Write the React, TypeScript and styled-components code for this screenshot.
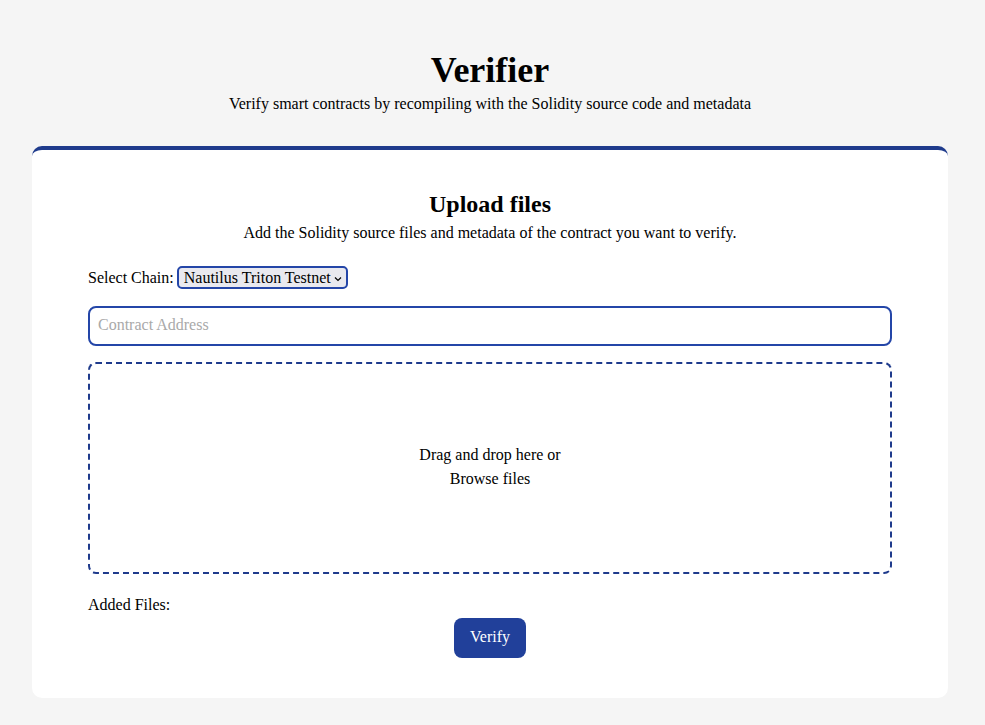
import React from "react";
import styled, { createGlobalStyle } from "styled-components";

const Global = createGlobalStyle`
  html, body { margin: 0; padding: 0; background: #f5f5f5; }
  body { font-family: "Liberation Serif", "Times New Roman", serif; color: #000; }
`;

const Page = styled.div`
  padding: 50px 37px 27px 32px;
`;

const Header = styled.header`
  display: flex;
  flex-direction: column;
  align-items: center;
`;

const Title = styled.h1`
  margin: 0;
  font-size: 36px;
  line-height: 41px;
  font-weight: 700;
`;

const Subtitle = styled.p`
  margin: 4px 0 0;
  font-size: 16px;
  line-height: 18px;
`;

const Card = styled.section`
  margin-top: 33px;
  background: #fff;
  border-top: 4px solid #1f3b8c;
  border-radius: 10px;
  padding: 40px 56px 40px;
  display: flex;
  flex-direction: column;
`;

const CardTitle = styled.h2`
  margin: 0;
  text-align: center;
  font-size: 24px;
  line-height: 28px;
  font-weight: 700;
`;

const CardSub = styled.p`
  margin: 6px 0 0;
  text-align: center;
  font-size: 16px;
  line-height: 18px;
`;

const ChainRow = styled.label`
  margin-top: 24px;
  display: flex;
  align-items: center;
  gap: 3px;
  font-size: 16px;
  height: 23px;
`;

const SelectBox = styled.div`
  display: inline-flex;
  align-items: center;
  gap: 3px;
  height: 23px;
  box-sizing: border-box;
  padding: 0 4px 0 5px;
  border: 2px solid #2446a8;
  border-radius: 5px;
  background: #e9e9ef;
  font-size: 16px;
`;

const Chevron = styled.svg`
  width: 8px;
  height: 8px;
  margin-top: 3px;
`;

const AddressInput = styled.input`
  margin-top: 17px;
  height: 40px;
  box-sizing: border-box;
  width: 100%;
  border: 2px solid #2446a8;
  border-radius: 8px;
  padding: 0 8px 2px;
  font-family: "Liberation Serif", "Times New Roman", serif;
  font-size: 16px;
  outline: none;
  &::placeholder { color: #a9a9a9; }
`;

const DropZone = styled.div`
  margin-top: 16px;
  height: 212px;
  box-sizing: border-box;
  border: 2px dashed #1f3b8c;
  border-radius: 8px;
  padding-bottom: 2px;
  display: flex;
  flex-direction: column;
  align-items: center;
  justify-content: center;
  font-size: 16px;
  line-height: 24px;
  text-align: center;
`;

const AddedLabel = styled.div`
  margin-top: 22px;
  font-size: 16px;
  line-height: 18px;
`;

const VerifyButton = styled.button`
  margin: 4px auto 0;
  height: 40px;
  padding: 0 16px 2px;
  border: none;
  border-radius: 8px;
  background: #21409a;
  color: #fff;
  font-family: "Liberation Serif", "Times New Roman", serif;
  font-size: 16px;
  cursor: pointer;
`;

export default function App() {
  return (
    <>
      <Global />
      <Page>
        <Header>
          <Title>Verifier</Title>
          <Subtitle>Verify smart contracts by recompiling with the Solidity source code and metadata</Subtitle>
        </Header>
        <Card>
          <CardTitle>Upload files</CardTitle>
          <CardSub>Add the Solidity source files and metadata of the contract you want to verify.</CardSub>
          <ChainRow>
            Select Chain:
            <SelectBox>
              Nautilus Triton Testnet
              <Chevron viewBox="0 0 8 8">
                <path d="M1 2.5 L4 5.5 L7 2.5" fill="none" stroke="#000" strokeWidth="1.2" />
              </Chevron>
            </SelectBox>
          </ChainRow>
          <AddressInput placeholder="Contract Address" />
          <DropZone>
            <div>Drag and drop here or</div>
            <div>Browse files</div>
          </DropZone>
          <AddedLabel>Added Files:</AddedLabel>
          <VerifyButton>Verify</VerifyButton>
        </Card>
      </Page>
    </>
  );
}
